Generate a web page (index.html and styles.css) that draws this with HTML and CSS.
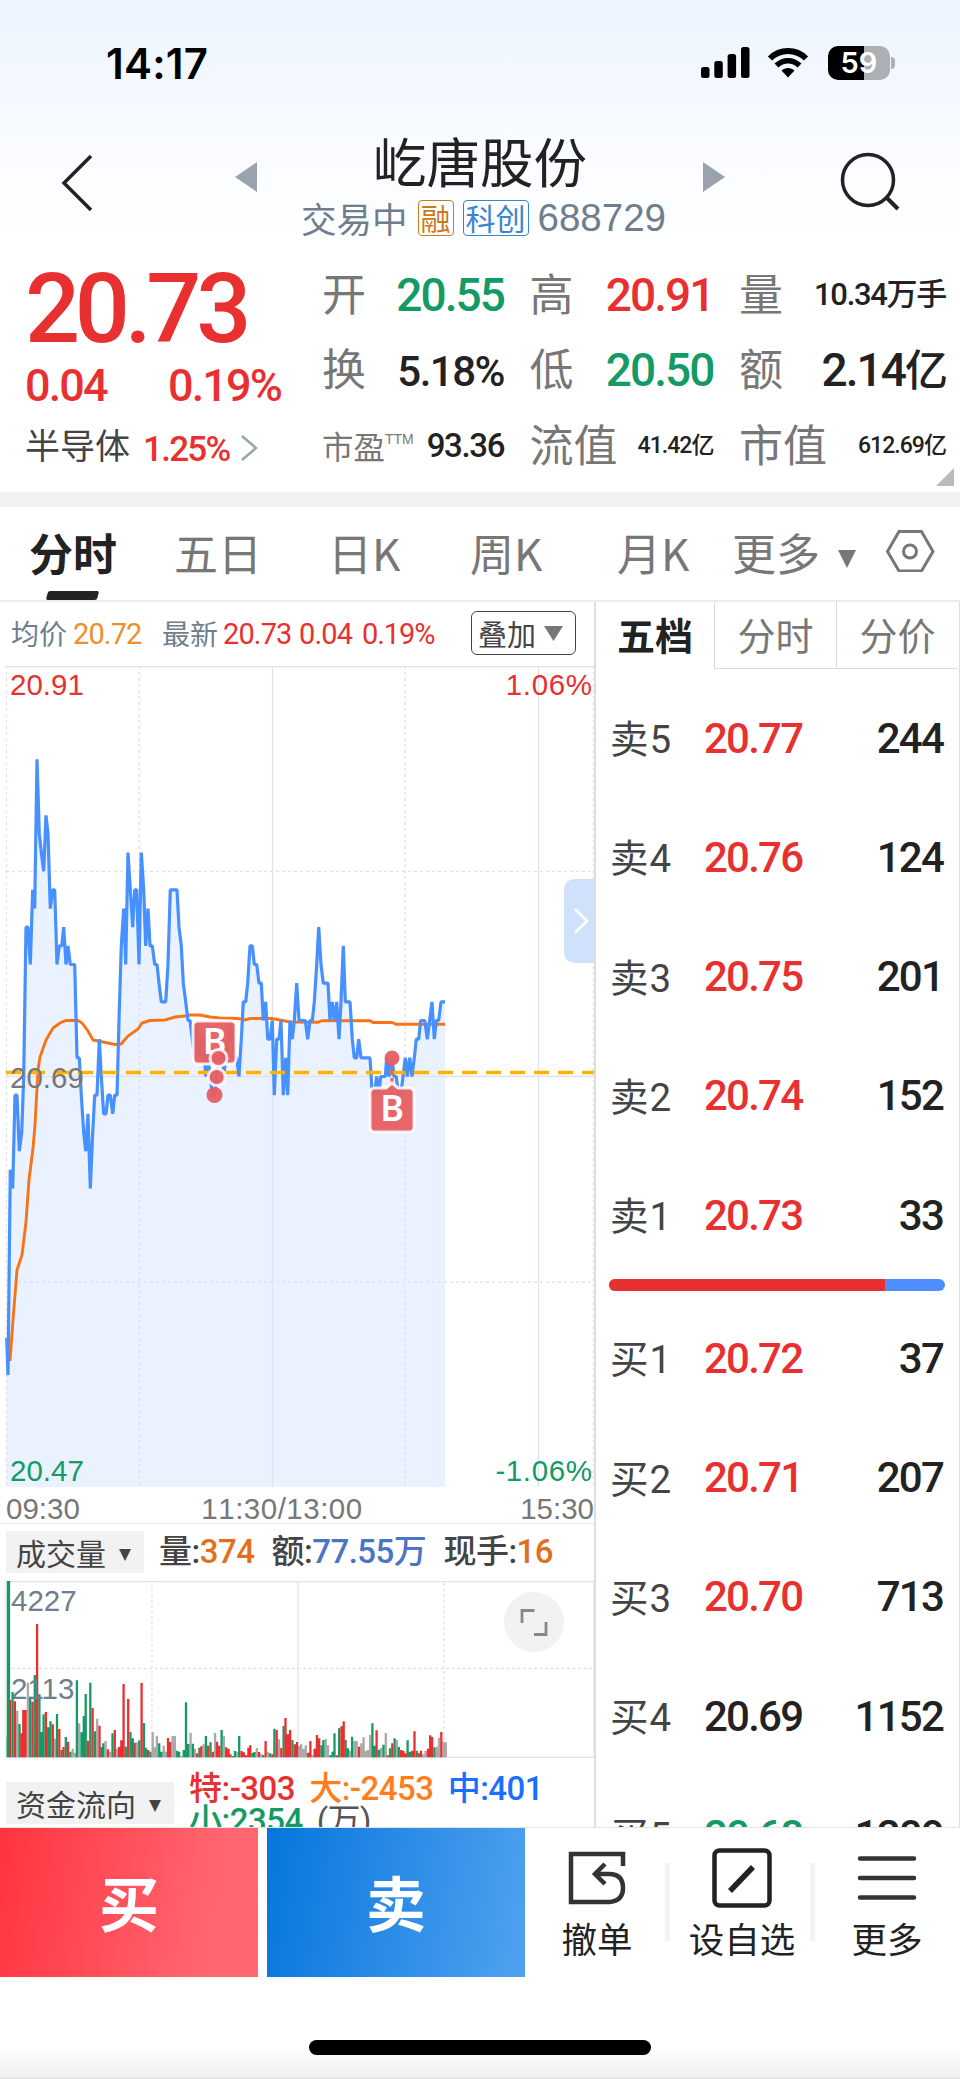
FILE: index.html
```html
<!DOCTYPE html>
<html lang="zh-CN">
<head>
<meta charset="utf-8">
<title>屹唐股份 688729</title>
<link rel="stylesheet" href="styles.css">
</head>
<body>
<div class="screen">
  <header class="top">
    <div class="status">
      <div class="clock">14:17</div>
      <div class="status-icons">
        <svg width="49" height="32" viewBox="0 0 49 32"><rect x="0" y="20" width="8.5" height="11" rx="2.5"/><rect x="13.3" y="14" width="8.5" height="17" rx="2.5"/><rect x="26.6" y="7" width="8.5" height="24" rx="2.5"/><rect x="40" y="0" width="8.5" height="31" rx="2.5"/></svg>
        <svg class="wifi" width="42" height="32" viewBox="0 0 42 32"><path d="M3 11.5C13 1.5 29 1.5 39 11.5" fill="none" stroke="#000" stroke-width="6"/><path d="M9.500 18.500C16 12 26 12 32.500 18.500" fill="none" stroke="#000" stroke-width="5.500"/><path d="M14.500 23.500C18 20 24 20 27.500 23.500L21 30.500Z"/></svg>
        <div class="battery"><span>59</span></div>
        <div class="nub"></div>
      </div>
    </div>
    <div class="nav">
      <svg class="back" width="34" height="60" viewBox="0 0 34 60"><path d="M31 3L4 30L31 57" fill="none" stroke="#222" stroke-width="3.500"/></svg>
      <svg class="prev" width="22" height="30" viewBox="0 0 22 30"><path d="M22 0V30L0 15Z" fill="#9aa3ad"/></svg>
      <div class="heading">
        <h1>屹唐股份</h1>
        <div class="sub"><span>交易中</span><span class="tag orange">融</span><span class="tag blue">科创</span><span class="code">688729</span></div>
      </div>
      <svg class="next" width="22" height="30" viewBox="0 0 22 30"><path d="M0 0V30L22 15Z" fill="#9aa3ad"/></svg>
      <svg class="search" width="62" height="62" viewBox="0 0 62 62"><circle cx="29" cy="29" r="25.500" fill="none" stroke="#222" stroke-width="3.500"/><path d="M47 46L59 58" stroke="#222" stroke-width="4"/></svg>
    </div>
  </header>

  <section class="quote">
    <div class="last">
      <div class="price num red">20.73</div>
      <div class="change num red"><span>0.04</span><span>0.19%</span></div>
      <div class="sector"><span>半导体</span><b class="num red">1.25%</b><svg width="17" height="28" viewBox="0 0 17 28"><path d="M1 2L15 14L1 26" fill="none" stroke="#9aa5b0" stroke-width="2.500"/></svg></div>
    </div>
    <dl class="stats">
      <div><dt>开</dt><dd class="num green">20.55</dd></div>
      <div><dt>高</dt><dd class="num red">20.91</dd></div>
      <div><dt>量</dt><dd class="num s30">10.34万手</dd></div>
      <div><dt>换</dt><dd class="num s42">5.18%</dd></div>
      <div><dt>低</dt><dd class="num green">20.50</dd></div>
      <div><dt>额</dt><dd class="num">2.14<i>亿</i></dd></div>
      <div><dt class="small">市盈<sup>TTM</sup></dt><dd class="num s33">93.36</dd></div>
      <div><dt>流值</dt><dd class="num s23">41.42亿</dd></div>
      <div><dt>市值</dt><dd class="num s23">612.69亿</dd></div>
    </dl>
    <svg class="corner" width="18" height="18" viewBox="0 0 18 18"><path d="M18 0V18H0Z" fill="#bbb"/></svg>
  </section>

  <nav class="tabs">
    <span class="on">分时</span><span>五日</span><span>日K</span><span>周K</span><span>月K</span>
    <span class="more">更多<svg width="18" height="18" viewBox="0 0 18 18"><path d="M0 0H18L9 18Z" fill="#777"/></svg></span>
    <svg class="gear" width="50" height="42" viewBox="0 0 50 42" fill="none" stroke="#777" stroke-width="3"><path d="M14 1.500H36.500L48 21.500L36.500 41H14L2.500 21.500Z"/><circle cx="25" cy="21.500" r="6.500"/></svg>
  </nav>

  <main class="main">
    <section class="charts">
      <div class="legend"><span class="lb">均价</span><span class="num lt avg">20.72</span><span class="lb latest">最新</span><span class="num lt red p1">20.73</span><span class="num lt red p2">0.04</span><span class="num lt red p3">0.19%</span>
        <button class="overlay">叠加<svg width="19" height="15" viewBox="0 0 19 15"><path d="M0 0H19L9.500 15Z" fill="#777"/></svg></button>
      </div>
      <svg class="plot" id="priceChart" width="594" height="821" viewBox="0 666 594 821">
        <path id="area" fill="#ebf2ff"/>
        <g fill="none" stroke="#dfe1ee" stroke-width="1.300">
          <path d="M6 666.600H594M272.500 666V1487M538.500 666V1487M6 1076.500H594"/>
          <path stroke-dasharray="3 3" d="M6.500 666V1487M139.300 666V1487M405.300 666V1487M593.500 666V1487M6 871.300H594M6 1282H594"/>
        </g>
        <path id="avgLine" fill="none" stroke="#f97316" stroke-width="2.900"/>
        <path id="priceLine" fill="none" stroke="#4790ff" stroke-width="3.200" stroke-linejoin="bevel"/>
        <path d="M6 1072.500H594" stroke="#ffb300" stroke-width="3.500" stroke-dasharray="15 9"/>
        <g class="axis">
          <text x="10" y="695" fill="#e93030">20.91</text><text class="wide" x="592.500" y="695" text-anchor="end" fill="#e93030">1.06%</text>
          <text x="10" y="1088" fill="#777">20.69</text>
          <text x="10" y="1480.500" fill="#149a64">20.47</text><text class="wide" x="592.500" y="1480.500" text-anchor="end" fill="#149a64">-1.06%</text>
        </g>
        <g fill="#e56063" fill-opacity=".96" stroke="#fff" stroke-opacity=".85" stroke-width="3">
          <rect x="193" y="1021" width="43" height="43" rx="5"/>
          <text class="mark" x="214.500" y="1054">B</text>
          <circle cx="214.500" cy="1095" r="8" stroke="none"/><circle cx="216.700" cy="1077" r="8.500"/><circle cx="218.500" cy="1058" r="8.500"/>
          <path d="M392 1060V1086" stroke="#e56063" stroke-opacity="1" stroke-width="3" stroke-dasharray="6 3"/>
          <path d="M375 1088H386L392 1083L398 1088H409Q414 1088 414 1093V1127Q414 1132 409 1132H375Q370 1132 370 1127V1093Q370 1088 375 1088Z"/>
          <text class="mark" x="392" y="1120.500">B</text>
          <circle cx="392" cy="1058" r="7.500" stroke="none"/>
        </g>
        <path d="M594 879H576Q564 879 564 891V951Q564 963 576 963H594Z" fill="#d0e1fb"/>
        <path d="M575 909L587 921L575 932.500" fill="none" stroke="#fff" stroke-width="2.500"/>
      </svg>
      <div class="times"><span>09:30</span><span>11:30/13:00</span><span>15:30</span></div>
      <div class="ind">
        <span class="pick">成交量<i>▼</i></span>
        <div class="vals num"><span>量:<em class="o">374</em></span><span>额:<em class="b">77.55万</em></span><span>现手:<em class="o">16</em></span></div>
      </div>
      <svg class="vol" width="594" height="177" viewBox="0 1581 594 177">
        <g fill="none" stroke="#e3e3e5" stroke-width="1.300"><path d="M6 1581.700H594V1757.300H6ZM298 1581V1757"/><path stroke-dasharray="3 2.500" d="M152 1583V1757M444 1583V1757M6 1668.500H594"/></g>
        <path id="volN" stroke="#a9a9a9" stroke-width="2.300"/><path id="volG" stroke="#149a64" stroke-width="2.300"/><path id="volR" stroke="#e93030" stroke-width="2.300"/>
        <g class="axis" fill="#6f7e8c"><text x="11" y="1611">4227</text><text x="11" y="1699">2113</text></g>
        <circle cx="534" cy="1622" r="30" fill="#f2f2f2"/>
        <path d="M522 1623V1610.500H534.500M534 1634.500H546V1622" fill="none" stroke="#888" stroke-width="2.800"/>
      </svg>
      <div class="ind flow">
        <span class="pick">资金流向<i>▼</i></span>
        <div class="vals num"><span class="red">特:-303</span><span class="dd">大:-2453</span><span class="zz">中:401</span><br><span class="green">小:2354</span><span class="unit">(万)</span></div>
      </div>
    </section>

    <section class="book">
      <div class="btabs"><span class="on">五档</span><span>分时</span><span>分价</span></div>
      <div class="rows">
        <div><span>卖5</span><b class="red">20.77</b><b>244</b></div>
        <div><span>卖4</span><b class="red">20.76</b><b>124</b></div>
        <div><span>卖3</span><b class="red">20.75</b><b>201</b></div>
        <div><span>卖2</span><b class="red">20.74</b><b>152</b></div>
        <div><span>卖1</span><b class="red">20.73</b><b>33</b></div>
      </div>
      <div class="ratio"><i style="width:82%"></i></div>
      <div class="rows">
        <div><span>买1</span><b class="red">20.72</b><b>37</b></div>
        <div><span>买2</span><b class="red">20.71</b><b>207</b></div>
        <div><span>买3</span><b class="red">20.70</b><b>713</b></div>
        <div><span>买4</span><b>20.69</b><b>1152</b></div>
        <div><span>买5</span><b class="green">20.68</b><b>1209</b></div>
      </div>
    </section>
  </main>

  <footer class="actions">
    <button class="buy">买</button><button class="sell">卖</button>
    <div class="act"><svg width="60" height="62" viewBox="0 0 60 62" fill="none" stroke="#333" stroke-width="4.500"><path d="M56 19V7H4V55H42Q56 54 56 41Q56 27 42 27H28"/><path d="M38 17L28 27L38 37"/></svg><span>撤单</span></div>
    <div class="act"><svg width="60" height="62" viewBox="0 0 60 62" fill="none" stroke="#222"><rect x="2.500" y="3.500" width="55" height="55" rx="5" stroke-width="4.500"/><path d="M18 44L41 20" stroke-width="5.500"/></svg><span>设自选</span></div>
    <div class="act"><svg width="60" height="62" viewBox="0 0 60 62" stroke="#333" stroke-width="4.500" stroke-linecap="round"><path d="M3 11.500H57M3 31H57M3 50.500H57"/></svg><span>更多</span></div>
  </footer>
  <div class="home"><i></i></div>
</div>
<script src="chart.js"></script>
</body>
</html>
```
FILE: styles.css
```css
* { box-sizing: border-box; margin: 0; padding: 0; }
body { background: #fff; color: #222; font-family: Roboto, "Noto Sans CJK SC", sans-serif; }
button { border: 0; background: none; font-family: inherit; color: inherit; }
i, em { font-style: normal; }
svg { display: block; flex: none; }
.screen { width: 960px; height: 2079px; overflow: hidden; display: flex; flex-direction: column; }
.num { font-family: Roboto, "Noto Sans CJK SC", sans-serif; font-weight: 500; letter-spacing: -.042em; font-kerning: none; }
.red { color: #e93030; }
.green { color: #149a64; }

.top { height: 250px; background: linear-gradient(#edf4fe, #f8fbff 55%, #fff); }
.status { height: 126px; display: flex; justify-content: space-between; padding: 0 65px 0 106px; align-items: center; }
.clock { font: 600 42px/50px Inter, sans-serif; letter-spacing: .2px; color: #000; padding-top: 2px; }
.status-icons { display: flex; align-items: center; }
.wifi { margin: 0 19px 0 17px; }
.battery { width: 62px; height: 34px; border-radius: 10px; background: linear-gradient(90deg, #000 58%, #adb0b5 58%); color: #fff; font: 600 29px/34px Inter, sans-serif; text-align: center; }
.nub { width: 4px; height: 12px; margin-left: 1px; border-radius: 0 4px 4px 0; background: #adb0b5; }
.nav { display: flex; align-items: flex-start; padding-left: 60px; }
.back { margin-top: 27px; }
.prev { margin: 36px 0 0 141px; }
.heading { width: 446px; height: 120px; display: flex; flex-direction: column; align-items: center; }
h1 { font: 400 53.500px/60px "Noto Sans CJK SC", sans-serif; margin-top: 4px; }
.sub { display: flex; align-items: center; height: 40px; margin-top: 8px; padding-left: 7px; font: 400 35.500px/40px "Noto Sans CJK SC", sans-serif; color: #6f7e8c; }
.tag { border: 1.500px solid; border-radius: 4px; height: 36px; line-height: 32px; font-size: 30px; padding: 0 2px; margin-left: 10px; }
.tag + .tag { margin-left: 9px; }
.tag.orange { color: #cc7a1f; }
.tag.blue { color: #3a85cf; }
.code { font: 38.500px/40px "Liberation Sans", sans-serif; margin-left: 9px; }
.next { margin-top: 36px; }
.search { margin: 25px 0 0 114px; }

.quote { height: 257px; border-bottom: 15px solid #f2f2f2; display: grid; grid-template-columns: 322px 625px; position: relative; }
.corner { position: absolute; right: 6px; bottom: 6px; }
.last { padding-left: 25px; }
.price { font-size: 97px; line-height: 110px; height: 110px; padding-top: 4px; letter-spacing: -5.300px; }
.change { font-size: 45px; line-height: 50px; display: flex; margin-top: 1px; }
.change span { width: 143px; white-space: nowrap; }
.sector { display: flex; align-items: center; font-size: 35px; line-height: 40px; margin-top: 17px; color: #444; }
.sector b { margin: 3px 12px 0 13px; line-height: 35px; letter-spacing: -.05em; }
.stats { display: grid; grid-template-columns: 182px 184px 207px; column-gap: 25.500px; grid-template-rows: repeat(3, 75.500px); padding-top: 7px; }
.stats div { display: flex; justify-content: space-between; align-items: center; white-space: nowrap; }
dt { font: 44px/60px "Noto Sans CJK SC", sans-serif; color: #777; margin-top: -6px; }
dt.small { font-size: 31.500px; margin-top: -2px; }
dt sup { font: 14px/14px "Liberation Sans", sans-serif; vertical-align: 15px; }
dd { font-size: 46px; line-height: 60px; letter-spacing: -.05em; }
dd i { font-size: 43px; }
.s42 { font-size: 42px; letter-spacing: -.036em; padding-top: 3px; }
.s33 { font-size: 33px; }
.s30 { font-size: 31px; }
.s23 { font-size: 23px; }

.tabs { height: 95px; border-bottom: 2px solid #e9ecf5; position: relative; display: grid; grid-template-columns: 145px 145px 145px 147px 114px 152px 1fr; padding-left: 29px; font: 44px/90px "Noto Sans CJK SC", sans-serif; color: #777; white-space: nowrap; }
.tabs .on { font-weight: 600; color: #222; position: relative; }
.tabs .on::after { content: ""; position: absolute; left: 18px; bottom: 0; width: 51px; height: 9px; background: #222; border-radius: 2px; transform: skewX(-15deg); }
.tabs span:nth-child(3) { padding-left: 9px; }
.tabs span:nth-child(4) { padding-left: 6px; }
.tabs span:nth-child(5) { padding-left: 6px; }
.tabs .more { padding-left: 7px; display: flex; align-items: center; gap: 18px; height: 90px; }
.more svg { margin-top: 14px; }
.gear { margin: 23px 0 0 8px; }

.main { height: 1226px; display: grid; grid-template-columns: 596px 364px; overflow: hidden; border-bottom: 1.500px solid #e3e3e3; }
.charts { border-right: 2px solid #dedee2; height: 1300px; }
.legend { height: 62px; margin-bottom: 2px; padding-left: 11px; display: flex; align-items: center; font-size: 28px; position: relative; white-space: nowrap; }
.lb { color: #6f7e8c; font-family: "Noto Sans CJK SC", sans-serif; width: 56px; }
.lt { font-weight: 400; font-size: 29px; width: 76px; padding-top: 1px; white-space: nowrap; letter-spacing: -.03em; }
.lt.avg { color: #ee8f2c; margin-left: 6px; width: 80px; }
.latest { margin-left: 9px; }
.lt.p1 { width: 76px; margin-left: 5px; }
.lt.p2 { width: 63px; }
.lt.p3 { letter-spacing: -.036em; }
.overlay { position: absolute; left: 471px; top: 9px; width: 105px; height: 44px; border: 1.500px solid #444; border-radius: 6px; display: flex; align-items: center; gap: 8px; padding-left: 6px; font: 29px/40px "Noto Sans CJK SC", sans-serif; color: #444; }
.axis, .times { font: 29.500px "Liberation Sans", sans-serif; }
.wide { letter-spacing: .6px; }
.mark { font: 600 36px "Noto Sans", "Noto Sans CJK SC", sans-serif; fill: #fff; fill-opacity: 1; stroke: none; text-anchor: middle; }
.times { height: 37px; border-bottom: 1.500px solid #e0e2ee; padding: 4px 0 0 6px; line-height: 35px; display: flex; justify-content: space-between; color: #777; }
.times span:nth-child(2) { margin-right: 36px; letter-spacing: .5px; font-kerning: none; }
.ind { height: 57px; display: flex; padding: 7px 0 0 6px; }
.pick { height: 42px; background: #f2f2f2; font: 30px/41px "Noto Sans CJK SC", sans-serif; color: #444; padding: 0 13px 0 10px; display: flex; align-items: center; gap: 13px; }
.pick i { font: 15.500px/20px "DejaVu Sans", sans-serif; padding-top: 4px; }
.vals { margin-left: 15px; font-size: 33px; line-height: 42px; color: #444; white-space: nowrap; letter-spacing: -.015em; }
.vals span { margin-right: 17px; }
.o { color: #e36f1e; }
.b { color: #4a74c4; }
.flow { padding-top: 24px; height: 90px; }
.flow .pick { height: 42px; }
.flow .vals { line-height: 32px; margin-top: -9px; }
.flow .vals span { margin-right: 14px; }
.dd { color: #ff7d1a; }
.zz { color: #1a6fff; }
.flow .unit { color: #555; font-weight: 400; }

.book { border-right: 1.500px solid #dedee2; }
.btabs { display: grid; grid-template-columns: 118px 122px 122px; height: 67px; font: 38px/64px "Noto Sans CJK SC", sans-serif; text-align: center; color: #777; }
.btabs span { border-left: 1.500px solid #d9d9d9; border-bottom: 1.500px solid #d9d9d9; }
.btabs .on { font-weight: 700; color: #222; border: 0; }
.rows { padding: 0 16px 0 14px; }
.book > .rows:nth-child(2) { padding-top: 9px; }
.rows div { height: 119.250px; display: grid; grid-template-columns: 94px 1fr auto; align-items: center; font-size: 42px; font-kerning: none; }
.rows span { font-size: 38.500px; color: #444; letter-spacing: 1px; margin-top: -3px; }
.rows b { font-weight: 500; letter-spacing: -.042em; padding-top: 1px; }
.ratio { margin: 5px 14px 7px 13px; height: 12px; border-radius: 6px; background: #4f8dff; overflow: hidden; }
.ratio i { display: block; height: 100%; background: #e93030; }

.actions { height: 149px; display: grid; grid-template-columns: 258px 258px 145px 145px 145px; column-gap: 0; }
.actions button { font: 700 60px/146px "Noto Sans CJK SC", sans-serif; color: #fff; padding-bottom: 3px; }
.buy { background: linear-gradient(100deg, #ff3440, #ff6670 80%); }
.sell { background: linear-gradient(100deg, #0676dc, #50a2f0); margin-left: 9px; width: 258px; }
.act { margin: 0 -4px 0 13px; display: flex; flex-direction: column; align-items: center; padding-top: 19px; position: relative; }
.act span { font: 35.500px/44px "Noto Sans CJK SC", sans-serif; margin-top: 7px; }
.act + .act::before { content: ""; position: absolute; left: -9px; top: 35px; width: 5px; height: 78px; background: #f2f2f2; }
.home { flex: 1; display: flex; justify-content: center; padding-top: 63px; background: linear-gradient(#fff 70%, #eeeeee); border-bottom: 1px solid #ddd; }
.home i { width: 342px; height: 15px; border-radius: 8px; background: #000; }
```
FILE: chart.js
```js
// Price path: "x:level" pairs; x is in thirds of a pixel, one level is 0.01 yuan from the previous close.
const MID = 1076.5, STEP = 18.66, BOTTOM = 1487;
const price = `20:-14 24:-16 31:-5 38:-6 45:-1 51:-1 58:-4 65:-3 71:0 78:8 84:8 91:6 98:10 104:9 111:17 118:13 124:12 131:11 138:14 144:13 151:9 158:10 164:10 171:6 178:7 185:7 191:8 198:6 204:7 211:6 224:6 231:1 238:1 244:-1 251:-3 257:-4 264:-2 271:-6 278:-3 284:-1 291:-1 298:2 304:0 311:-2 318:-2 324:-1 331:-1 338:-2 344:-1 351:-1 357:3 364:7 371:9 377:6 384:12 391:10 398:8 404:10 410:10 417:6 424:12 431:10 437:7 444:9 450:7 457:7 464:6 471:6 477:5 484:4 497:4 504:6 511:10 531:10 537:8 544:7 550:5 557:4 564:3 570:3 577:2 584:1 590:3 597:1 604:2 610:2 617:0 624:1 631:0 637:-1 644:-1 650:0 657:1 664:2 671:0 677:1 690:3 697:2 704:1 710:1 717:0 724:2 730:4 737:4 743:5 750:7 757:7 763:6 770:6 777:5 784:5 790:3 797:4 803:2 810:2 817:3 823:-1 830:2 837:2 843:3 850:-1 857:1 863:-1 870:3 877:2 883:3 890:5 897:3 916:3 923:2 930:3 937:3 943:4 950:6 956:8 963:6 970:5 984:5 990:3 997:4 1003:3 1010:4 1017:2 1023:4 1030:7 1036:4 1050:4 1057:2 1063:1 1070:1 1076:2 1083:1 1110:1 1117:-1 1123:-1 1130:0 1136:-1 1142:0 1156:0 1160:1 1167:0 1176:1 1182:0 1189:0 1195:-1 1202:-1 1209:0 1216:1 1222:0 1229:1 1236:0 1243:1 1249:2 1256:2 1262:3 1274:3 1282:2 1289:3 1296:4 1303:2 1309:3 1316:3 1323:4 1335:4`;
const pts = price.split(' ').map(p => { const [x, k] = p.split(':').map(Number); return (x / 3).toFixed(1) + ' ' + (MID - STEP * k).toFixed(1); });
const line = 'M' + pts.join('L');
document.getElementById('priceLine').setAttribute('d', line);
document.getElementById('area').setAttribute('d', line + 'V' + BOTTOM + 'H6Z');

const avg = '10 1361,13 1320,17 1270,22 1255,26 1222,29 1180,33 1148,35 1125,38 1070,40 1057,46 1040,53 1028,60 1023,66 1020.5,78 1020.5,82 1023,88 1031,93 1040,98 1041,108 1043,115 1044.5,121 1044,128 1036,138 1029,142 1023,150 1020.500,165 1020,175 1017,185 1016,190 1015,200 1015,210 1017,220 1018,238 1018.500,245 1020,250 1018.500,272 1018.500,280 1020,290 1022,318 1022.300,322 1020.700,370 1020.700,373 1022.500,392 1022.500,396 1024.300,445 1024.300';
document.getElementById('avgLine').setAttribute('d', 'M' + avg.split(',').join('L'));

// Volume bars: x, top and direction (r up, g down, n flat).
const vol = `20 770 g,27 660 r,33 636 g,39 664 r,45 692 n,51 732 g,56 760 r,61 690 r,67 690 r,73 608 n,79 650 g,85 665 r,91 585 g,97 432 r,103 643 g,108 756 g,114 703 g,120 696 r,126 742 g,132 724 g,138 733 r,144 776 n,149 702 g,155 747 r,161 810 g,166 801 r,172 771 g,178 785 r,184 815 g,190 806 n,196 818 n,201 601 g,207 730 n,213 757 g,219 708 g,224 642 g,230 782 r,236 608 g,242 684 r,248 754 g,254 716 n,260 737 r,265 801 g,270 790 g,276 783 n,282 808 r,288 815 n,294 760 g,300 750 r,306 806 n,311 801 r,317 781 r,323 612 r,329 800 g,335 657 r,341 756 g,347 775 g,352 788 r,358 787 n,364 781 g,370 609 r,376 729 g,381 803 g,387 810 r,393 815 g,399 756 n,405 802 n,410 767 n,416 790 g,422 815 g,428 797 n,434 815 n,439 774 r,445 786 r,451 768 n,457 768 n,463 812 g,468 815 g,474 828 n,480 810 g,486 667 g,492 792 g,498 758 n,504 791 g,509 806 n,515 820 r,521 803 g,526 799 r,532 793 n,538 768 g,544 797 r,550 787 g,556 815 r,562 759 n,567 785 r,573 797 r,579 750 g,585 768 n,591 802 r,597 806 r,602 823 r,608 828 g,614 813 g,620 815 n,625 768 g,631 813 r,637 817 r,643 826 r,649 803 r,654 796 r,660 819 g,665 816 g,671 804 n,677 816 r,683 823 n,688 825 g,694 783 r,700 815 n,706 820 g,712 823 r,717 746 g,723 750 r,729 778 n,735 804 r,741 738 g,746 714 r,752 763 r,758 750 r,764 780 g,770 793 r,776 786 r,781 798 n,787 793 n,793 806 n,799 796 n,805 818 r,811 783 r,816 825 n,822 806 r,828 765 r,834 775 r,840 796 g,845 780 g,851 777 n,857 796 n,863 826 g,869 815 g,874 760 g,880 826 r,886 745 g,892 739 r,898 724 r,903 780 g,909 805 g,915 812 n,920 770 g,926 783 n,932 783 n,938 800 r,944 790 n,950 772 n,955 813 n,961 810 n,967 765 n,973 730 g,979 797 g,984 751 r,990 809 g,996 804 n,1002 794 g,1008 759 n,1013 826 r,1019 805 g,1025 790 r,1031 775 g,1037 780 n,1042 801 g,1048 810 r,1054 812 r,1060 820 r,1065 781 g,1071 815 g,1077 812 r,1083 754 r,1089 812 g,1095 820 r,1100 812 r,1106 823 n,1112 813 n,1118 806 r,1124 766 r,1129 771 r,1135 802 g,1141 800 n,1147 773 n,1153 756 r,1159 785 n,1165 787 n`;
const d = { r: '', g: 'M8 1581V1757.300M9 1581V1757.300', n: '' };
vol.split(',').forEach(v => { const [x, y, c] = v.split(' '); d[c] += 'M' + (x / 2.613).toFixed(1) + ' ' + (1480 + y / 3).toFixed(1) + 'V1757.300'; });
document.getElementById('volR').setAttribute('d', d.r);
document.getElementById('volG').setAttribute('d', d.g);
document.getElementById('volN').setAttribute('d', d.n);
```
